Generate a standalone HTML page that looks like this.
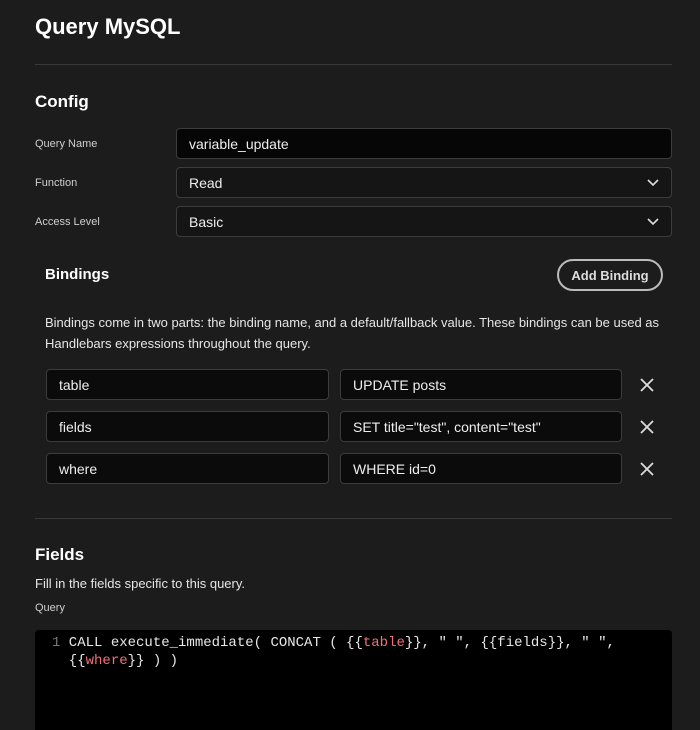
<!DOCTYPE html>
<html><head><style>
*{box-sizing:border-box;margin:0;padding:0}
body{width:700px;height:725px;background:#1c1c1c;color:#e6e6e6;font-family:"Liberation Sans",sans-serif;position:relative;overflow:hidden}
.a{position:absolute}
h1{position:absolute;left:35px;top:14px;font-size:22px;font-weight:bold;color:#fff}
h2{position:absolute;font-size:17px;font-weight:bold;color:#fff}
.hr{position:absolute;left:35px;width:637px;height:1px;background:#383838}
.lbl{position:absolute;left:35px;font-size:11px;color:#cfcfcf}
.in{position:absolute;background:#0b0b0b;border:1px solid #3c3c3c;border-radius:4px;font-size:14px;color:#eee;padding-left:12px;display:flex;align-items:center}
.x{position:absolute;left:639px;width:16px;height:16px}
.chev{position:absolute;right:12px;top:10px}
</style></head><body>
<h1>Query MySQL</h1>
<div class="hr" style="top:64px"></div>
<h2 style="left:35px;top:92px">Config</h2>
<div class="lbl" style="top:138px">Query Name</div>
<div class="in" style="left:176px;top:128px;width:496px;height:31px;background:#060606">variable_update</div>
<div class="lbl" style="top:177px">Function</div>
<div class="in" style="left:176px;top:167px;width:496px;height:31px;background:#151515">Read<svg class="chev" width="12" height="10" viewBox="0 0 12 10"><path d="M1 2l5 5 5-5" stroke="#ddd" stroke-width="1.6" fill="none"/></svg></div>
<div class="lbl" style="top:216px">Access Level</div>
<div class="in" style="left:176px;top:206px;width:496px;height:31px;background:#151515">Basic<svg class="chev" width="12" height="10" viewBox="0 0 12 10"><path d="M1 2l5 5 5-5" stroke="#ddd" stroke-width="1.6" fill="none"/></svg></div>
<h2 style="left:45px;top:266px;font-size:15px">Bindings</h2>
<div class="a" style="left:557px;top:259px;width:106px;height:32px;border:2px solid #bbb;border-radius:16px;font-size:13px;font-weight:bold;color:#ddd;display:flex;align-items:center;justify-content:center">Add Binding</div>
<div class="a" style="left:45px;top:312px;font-size:13px;line-height:21px;color:#e6e6e6;width:630px">Bindings come in two parts: the binding name, and a default/fallback value. These bindings can be used as Handlebars expressions throughout the query.</div>
<div class="in" style="left:46px;top:369px;width:283px;height:31px">table</div>
<div class="in" style="left:340px;top:369px;width:282px;height:31px">UPDATE posts</div>
<div class="in" style="left:46px;top:411px;width:283px;height:31px">fields</div>
<div class="in" style="left:340px;top:411px;width:282px;height:31px">SET title="test", content="test"</div>
<div class="in" style="left:46px;top:453px;width:283px;height:31px">where</div>
<div class="in" style="left:340px;top:453px;width:282px;height:31px">WHERE id=0</div>
<svg class="x" style="top:377px" viewBox="0 0 16 16"><path d="M2 2l12 12M14 2L2 14" stroke="#ddd" stroke-width="1.8"/></svg>
<svg class="x" style="top:419px" viewBox="0 0 16 16"><path d="M2 2l12 12M14 2L2 14" stroke="#ddd" stroke-width="1.8"/></svg>
<svg class="x" style="top:461px" viewBox="0 0 16 16"><path d="M2 2l12 12M14 2L2 14" stroke="#ddd" stroke-width="1.8"/></svg>
<div class="hr" style="top:518px"></div>
<h2 style="left:35px;top:545px">Fields</h2>
<div class="a" style="left:35px;top:576px;font-size:13px;color:#e6e6e6">Fill in the fields specific to this query.</div>
<div class="a" style="left:35px;top:602px;font-size:11px;color:#cfcfcf">Query</div>
<div class="a" style="left:35px;top:630px;width:637px;height:100px;background:#000;border-radius:4px 4px 0 0"></div>
<div class="a" style="left:52px;top:634px;font-family:'Liberation Mono',monospace;font-size:14px;line-height:18px;color:#e8e8e8;white-space:pre"><span style="color:#777">1</span> CALL execute_immediate( CONCAT ( {{<span style="color:#f07178">table</span>}}, " ", {{fields}}, " ",
  {{<span style="color:#f07178">where</span>}} ) )</div>
</body></html>
